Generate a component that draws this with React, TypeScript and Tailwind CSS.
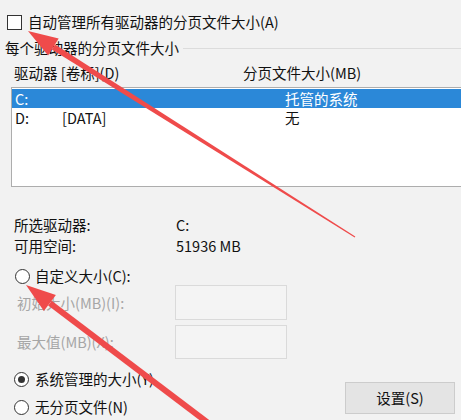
import React from "react";

function Radio({ checked }: { checked?: boolean }) {
  return (
    <span className="w-[15px] h-[15px] rounded-full border border-[#333] bg-white flex items-center justify-center shrink-0">
      {checked && <span className="w-[7px] h-[7px] rounded-full bg-[#333]" />}
    </span>
  );
}

export default function App() {
  return (
    <div className="relative w-[461px] h-[420px] overflow-hidden bg-[#f2f2f2] text-[14.5px] text-[#111] font-['Noto_Sans_CJK_SC','Liberation_Sans',sans-serif] leading-[20px]">
      <div className="flex flex-col">
        <div className="mt-[12px] h-[20px] flex items-center pl-[7px] gap-[6px]">
          <span className="w-[15px] h-[15px] border border-[#333] bg-white shrink-0" />
          <span className="whitespace-nowrap">自动管理所有驱动器的分页文件大小(A)</span>
        </div>
        <div className="mt-[6px] h-[20px] flex items-center pl-[5px]">
          <span className="whitespace-nowrap">每个驱动器的分页文件大小</span>
          <div className="flex-1 h-px bg-[#dcdcdc] ml-[4px]" />
        </div>
        <div className="mt-[5px] h-[20px] flex pl-[14px] whitespace-nowrap">
          <span className="w-[229px]">驱动器 [卷标](D)</span>
          <span>分页文件大小(MB)</span>
        </div>
        <div className="mt-[4px] ml-[11px] w-[460px] h-[100px] border border-[#adadad] bg-white pt-px shrink-0">
          <div className="h-[19px] flex items-center bg-[#2b88d8] text-white pl-[3px] whitespace-nowrap">
            <span className="w-[47px]">C:</span>
            <span className="w-[223px]"></span>
            <span>托管的系统</span>
          </div>
          <div className="h-[19px] flex items-center pl-[3px] whitespace-nowrap">
            <span className="w-[47px]">D:</span>
            <span className="w-[223px]">[DATA]</span>
            <span>无</span>
          </div>
        </div>
        <div className="mt-[28px] h-[20px] flex pl-[14px] whitespace-nowrap">
          <span className="w-[162px]">所选驱动器:</span>
          <span>C:</span>
        </div>
        <div className="mt-[1px] h-[20px] flex pl-[14px] whitespace-nowrap">
          <span className="w-[162px]">可用空间:</span>
          <span>51936 MB</span>
        </div>
        <div className="mt-[11px] h-[18px] flex items-center pl-[15px] gap-[5px] whitespace-nowrap">
          <Radio />
          <span>自定义大小(C):</span>
        </div>
        <div className="h-[35px] flex items-center pl-[17px] text-[#a6a6a6] whitespace-nowrap">
          <span className="w-[158px]">初始大小(MB)(I):</span>
          <span className="w-[112px] h-[35px] border border-[#dadada] bg-[#f4f4f4]" />
        </div>
        <div className="mt-[5px] h-[34px] flex items-center pl-[17px] text-[#a6a6a6] whitespace-nowrap">
          <span className="w-[158px]">最大值(MB)(X):</span>
          <span className="w-[112px] h-[34px] border border-[#dadada] bg-[#f4f4f4]" />
        </div>
        <div className="flex">
          <div className="flex flex-col">
            <div className="mt-[10px] h-[20px] flex items-center pl-[14px] gap-[6px] whitespace-nowrap">
              <Radio checked />
              <span>系统管理的大小(Y)</span>
            </div>
            <div className="mt-[8px] h-[20px] flex items-center pl-[14px] gap-[6px] whitespace-nowrap">
              <Radio />
              <span>无分页文件(N)</span>
            </div>
          </div>
          <div className="ml-auto mr-[6px] mt-[23px] w-[110px] h-[32px] border border-[#cccccc] bg-[#e4e4e4] flex items-center justify-center">
            设置(S)
          </div>
        </div>
      </div>
      <svg className="absolute inset-0 pointer-events-none" width="461" height="420" viewBox="0 0 461 420">
        <polygon points="28,31 48.1,55.4 58.7,38.4" fill="#ef4b4b" />
        <polygon points="51.8,49.4 55.0,44.4 355.3,236.6 354.7,237.4" fill="#ef4b4b" />
        <polygon points="26,285 43.9,311.1 55.9,295.1" fill="#ef4b4b" />
        <polygon points="48.1,305.5 51.7,300.7 266.8,463.6 263.2,468.4" fill="#ef4b4b" />
      </svg>
    </div>
  );
}
